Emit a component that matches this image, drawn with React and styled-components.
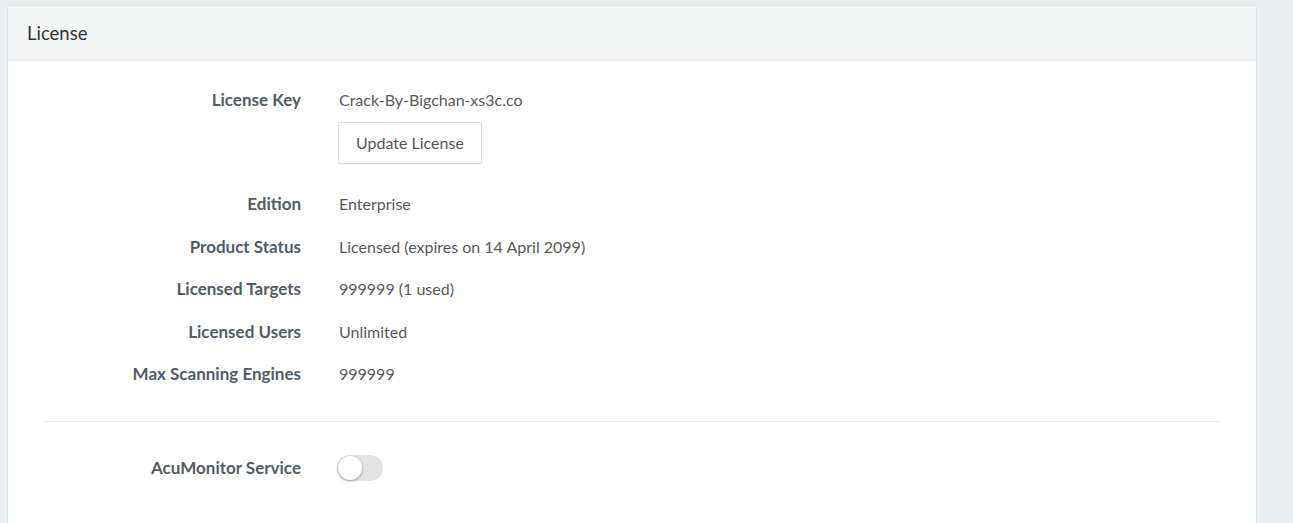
import React, { useState } from "react";
import styled, { createGlobalStyle } from "styled-components";

const Global = createGlobalStyle`
  html, body { margin: 0; padding: 0; background: #eaeef0; }
  body { font-family: Lato, "Noto Sans", sans-serif; font-size: 16px; color: #555; }
  * { box-sizing: border-box; }
`;

const Page = styled.div`
  padding: 5px 36px 0 7px;
  height: 523px;
  overflow: hidden;
`;

const Card = styled.section`
  background: #fff;
  border: 1px solid #dfe3e5;
  border-radius: 3px 3px 0 0;
  min-height: 530px;
`;

const CardHeader = styled.header`
  height: 55px;
  background: #f4f6f6;
  border-bottom: 1px solid #e6e9ea;
  padding: 0 19px;
  display: flex;
  align-items: center;
  font-size: 18.5px;
  color: #333;
`;

const CardBody = styled.div`
  padding: 28px 37px 40px;
`;

const Row = styled.div`
  display: grid;
  grid-template-columns: 256px 1fr;
  column-gap: 38px;
  align-items: start;
  margin-bottom: ${(p) => p.$mb ?? 20.5}px;
`;

const Label = styled.div`
  text-align: right;
  font-weight: 700;
  font-size: 17px;
  color: #525c66;
  line-height: 22px;
`;

const Value = styled.div`
  color: #595959;
  line-height: 22px;
  display: flex;
  flex-direction: column;
  align-items: flex-start;
`;

const Button = styled.button`
  margin: 11px 0 0 -1px;
  height: 42px;
  padding: 0 17px;
  font: inherit;
  color: #555;
  background: #fff;
  border: 1px solid #dcdcdc;
  border-radius: 2px;
  box-shadow: 0 1px 1px rgba(0,0,0,0.04);
  cursor: pointer;
`;

const Divider = styled.hr`
  border: 0;
  border-top: 1px solid #e8e8e8;
  margin: 36px 0 35px;
`;

const Track = styled.button`
  width: 46px;
  height: 26px;
  border-radius: 13px;
  border: 0;
  padding: 0;
  background: ${(p) => (p.$on ? "#4cae4c" : "#e2e2e2")};
  position: relative;
  cursor: pointer;
  margin: -2px 0 0 -2px;
`;

const Knob = styled.span`
  position: absolute;
  top: 1px;
  left: ${(p) => (p.$on ? "21px" : "1px")};
  width: 24px;
  height: 24px;
  border-radius: 50%;
  background: #fff;
  box-shadow: 0 1px 3px rgba(0,0,0,0.35);
  transition: left 0.15s;
`;

const rows = [
  ["Edition", "Enterprise"],
  ["Product Status", "Licensed (expires on 14 April 2099)"],
  ["Licensed Targets", "999999 (1 used)"],
  ["Licensed Users", "Unlimited"],
  ["Max Scanning Engines", "999999"],
];

export default function App() {
  const [on, setOn] = useState(false);
  return (
    <>
      <Global />
      <Page>
        <Card>
          <CardHeader>License</CardHeader>
          <CardBody>
            <Row $mb={29}>
              <Label>License Key</Label>
              <Value>
                Crack-By-Bigchan-xs3c.co
                <Button>Update License</Button>
              </Value>
            </Row>
            {rows.map(([l, v], i) => (
              <Row key={l} $mb={i === rows.length - 1 ? 0 : 20.5}>
                <Label>{l}</Label>
                <Value>{v}</Value>
              </Row>
            ))}
            <Divider />
            <Row $mb={0}>
              <Label>AcuMonitor Service</Label>
              <Value>
                <Track $on={on} onClick={() => setOn(!on)} aria-label="AcuMonitor Service">
                  <Knob $on={on} />
                </Track>
              </Value>
            </Row>
          </CardBody>
        </Card>
      </Page>
    </>
  );
}
